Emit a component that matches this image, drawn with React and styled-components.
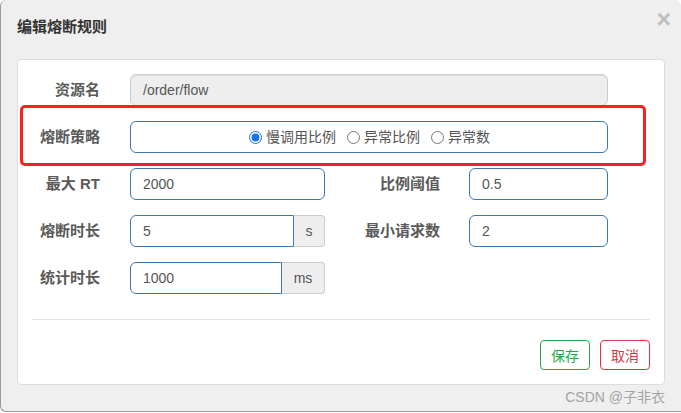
import React from "react";
import styled, { createGlobalStyle } from "styled-components";

const GlobalStyle = createGlobalStyle`
  html, body {
    margin: 0;
    padding: 0;
    background: #fff;
  }
  body {
    font-family: "Liberation Sans", "Noto Sans CJK SC", sans-serif;
  }
`;

const FONT = `"Liberation Sans", "Noto Sans CJK SC", sans-serif`;
const BLUE = "#3a78b8";

const Dialog = styled.div`
  position: relative;
  width: 681px;
  height: 412px;
  box-sizing: border-box;
  background: #efefef;
  border-left: 1px solid #9a9a9a;
  border-bottom: 1px solid #9a9a9a;
  border-radius: 6px 6px 0 6px;
  display: flex;
  flex-direction: column;
  font-family: ${FONT};
`;

const Header = styled.div`
  height: 59px;
  box-sizing: border-box;
  padding: 17px 10px 0 16px;
  display: flex;
  justify-content: space-between;
  align-items: flex-start;
`;

const Title = styled.h4`
  margin: 0;
  font-size: 15px;
  line-height: 20px;
  font-weight: bold;
  color: #333;
`;

const Close = styled.button`
  margin-top: -10px;
  padding: 0;
  border: 0;
  background: transparent;
  font-family: ${FONT};
  font-size: 25px;
  font-weight: bold;
  line-height: 1;
  color: #000;
  opacity: 0.2;
  cursor: pointer;
`;

const Panel = styled.div`
  margin: 0 16px 0 16px;
  height: 326px;
  box-sizing: border-box;
  background: #fff;
  border: 1px solid #ddd;
  border-radius: 4px;
  padding-top: 14px;
`;

const Form = styled.form`
  display: flex;
  flex-direction: column;
  gap: 15px;
`;

const Row = styled.div`
  display: flex;
  align-items: center;
  height: 32px;
`;

const Label = styled.label`
  width: ${({ $w }) => $w}px;
  padding-right: ${({ $pr }) => $pr}px;
  box-sizing: border-box;
  text-align: right;
  font-size: 15px;
  font-weight: bold;
  line-height: 20px;
  color: #5a5a5a;
  white-space: nowrap;
`;

const Field = styled.input`
  width: ${({ $w }) => $w}px;
  height: 32px;
  box-sizing: border-box;
  margin: 0;
  padding: 0 12px;
  border: 1px solid ${({ disabled }) => (disabled ? "#ccc" : BLUE)};
  border-radius: ${({ $addon }) => ($addon ? "6px 0 0 6px" : "6px")};
  background: ${({ disabled }) => (disabled ? "#eee" : "#fff")};
  box-shadow: ${({ disabled }) =>
    disabled ? "inset 0 1px 1px rgba(0,0,0,.075)" : "none"};
  font-family: ${FONT};
  font-size: 14px;
  color: #555;
  outline: none;
`;

const Group = styled.div`
  display: flex;
`;

const Addon = styled.span`
  width: ${({ $w }) => $w}px;
  height: 32px;
  box-sizing: border-box;
  display: flex;
  align-items: center;
  justify-content: center;
  background: #eee;
  border: 1px solid #ccc;
  border-left: 0;
  border-radius: 0 4px 4px 0;
  font-size: 14px;
  color: #555;
`;

const RadioBox = styled.div`
  width: 478px;
  height: 32px;
  box-sizing: border-box;
  border: 1px solid ${BLUE};
  border-radius: 6px;
  display: flex;
  align-items: center;
  justify-content: center;
  gap: 11px;
  padding-left: 1px;
`;

const RadioItem = styled.label`
  display: inline-flex;
  align-items: center;
  gap: 4px;
  font-size: 14px;
  line-height: 18px;
  color: #555;
`;

const Radio = styled.input`
  margin: 0;
  width: 13px;
  height: 13px;
  accent-color: #1a73e8;
`;

const Divider = styled.div`
  margin: 25px 14px 0;
  border-top: 1px solid #e5e5e5;
`;

const Footer = styled.div`
  display: flex;
  justify-content: flex-end;
  gap: 10px;
  padding: 20px 14px 0;
`;

const Button = styled.button`
  width: 50px;
  height: 30px;
  padding: 0;
  background: #fff;
  border: 1px solid ${({ $c }) => $c};
  border-radius: 4px;
  color: ${({ $c }) => $c};
  font-family: ${FONT};
  font-size: 14px;
  cursor: pointer;
`;

const Highlight = styled.div`
  position: absolute;
  left: 19px;
  top: 105px;
  width: 626px;
  height: 61px;
  box-sizing: border-box;
  border: 3px solid #ff1d1d;
  border-radius: 5px;
  pointer-events: none;
`;

const Watermark = styled.div`
  position: absolute;
  right: 16px;
  bottom: 6px;
  font-size: 14px;
  line-height: 16px;
  color: #a3a3a3;
  pointer-events: none;
`;

export default function App() {
  return (
    <>
      <GlobalStyle />
      <Dialog>
        <Header>
          <Title>编辑熔断规则</Title>
          <Close type="button">×</Close>
        </Header>
        <Panel>
          <Form>
            <Row>
              <Label $w={112} $pr={30}>资源名</Label>
              <Field $w={478} disabled defaultValue="/order/flow" />
            </Row>
            <Row>
              <Label $w={112} $pr={30}>熔断策略</Label>
              <RadioBox>
                <RadioItem>
                  <Radio type="radio" name="grade" defaultChecked />
                  慢调用比例
                </RadioItem>
                <RadioItem>
                  <Radio type="radio" name="grade" />
                  异常比例
                </RadioItem>
                <RadioItem>
                  <Radio type="radio" name="grade" />
                  异常数
                </RadioItem>
              </RadioBox>
            </Row>
            <Row>
              <Label $w={112} $pr={30}>最大 RT</Label>
              <Field $w={195} defaultValue="2000" />
              <Label $w={144} $pr={29}>比例阈值</Label>
              <Field $w={139} defaultValue="0.5" />
            </Row>
            <Row>
              <Label $w={112} $pr={30}>熔断时长</Label>
              <Group>
                <Field $w={164} $addon defaultValue="5" />
                <Addon $w={31}>s</Addon>
              </Group>
              <Label $w={144} $pr={29}>最小请求数</Label>
              <Field $w={139} defaultValue="2" />
            </Row>
            <Row>
              <Label $w={112} $pr={30}>统计时长</Label>
              <Group>
                <Field $w={152} $addon defaultValue="1000" />
                <Addon $w={43}>ms</Addon>
              </Group>
            </Row>
          </Form>
          <Divider />
          <Footer>
            <Button type="button" $c="#28a745">保存</Button>
            <Button type="button" $c="#dc3545">取消</Button>
          </Footer>
        </Panel>
        <Highlight />
        <Watermark>CSDN @子非衣</Watermark>
      </Dialog>
    </>
  );
}
